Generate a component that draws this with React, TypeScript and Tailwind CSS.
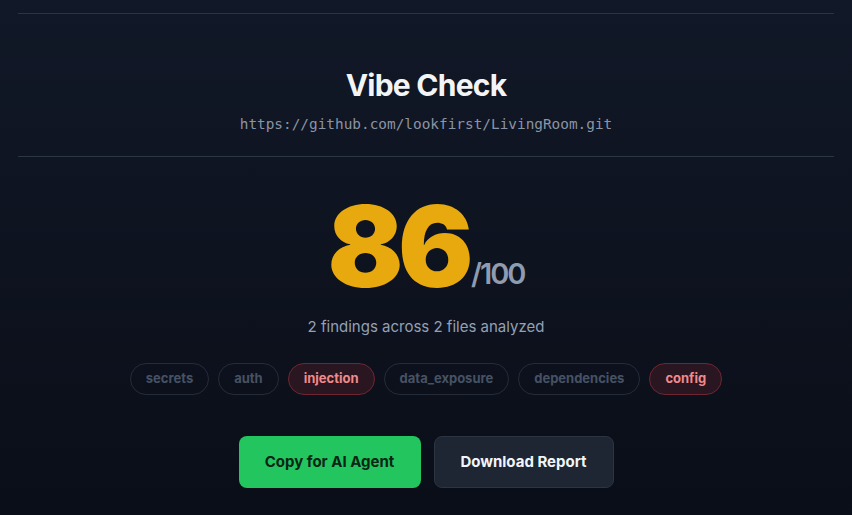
const tags: { name: string; hit: boolean }[] = [
  { name: "secrets", hit: false },
  { name: "auth", hit: false },
  { name: "injection", hit: true },
  { name: "data_exposure", hit: false },
  { name: "dependencies", hit: false },
  { name: "config", hit: true },
];

export default function App() {
  return (
    <main className="min-h-[515px] bg-gradient-to-b from-[#111827] to-[#0a0e18] px-[18px] font-['Inter','Noto_Sans',sans-serif]">
      <div className="h-[14px] border-b border-[#2e3542]" />

      <header className="border-b border-[#2e3542] pt-[53px] pb-[22px] text-center">
        <h1 className="text-[30px] leading-9 font-bold tracking-tight text-[#f3f4f6]">Vibe Check</h1>
        <p className="mt-[11px] font-['DejaVu_Sans_Mono','Liberation_Mono',monospace] text-[14.4px] leading-5 text-[#8a94a4]">
          https://github.com/lookfirst/LivingRoom.git
        </p>
      </header>

      <section className="flex flex-col items-center pt-[33px]">
        <div className="flex items-end">
          <span className="text-[112px] leading-none font-black tracking-tighter text-[#e7a90d]">86</span>
          <span className="mb-[14px] ml-[3px] text-[29px] leading-none font-semibold tracking-[-0.07em] text-[#8e9bb0]">
            /100
          </span>
        </div>

        <p className="mt-[13px] text-[15px] leading-6 text-[#94a0b4]">2 findings across 2 files analyzed</p>

        <div className="mt-6 flex gap-[9px]">
          {tags.map((t) => (
            <span
              key={t.name}
              className={`flex h-8 items-center rounded-full border px-[15px] text-[13px] font-bold ${
                t.hit
                  ? "border-[#6e2630] bg-[#2a1620] text-[#f08a8c]"
                  : "border-[#242c3a] text-[#465264]"
              }`}
            >
              {t.name}
            </span>
          ))}
        </div>

        <div className="mt-[41px] flex gap-[13px]">
          <button
            type="button"
            className="h-[52px] w-[182px] rounded-lg bg-[#22c55e] text-[15px] font-bold text-[#0b2515]"
          >
            Copy for AI Agent
          </button>
          <button
            type="button"
            className="h-[52px] w-[180px] rounded-lg border border-[#2c3544] bg-[#1e2533] text-[15px] font-bold text-[#f1f5f9]"
          >
            Download Report
          </button>
        </div>
      </section>
    </main>
  );
}
